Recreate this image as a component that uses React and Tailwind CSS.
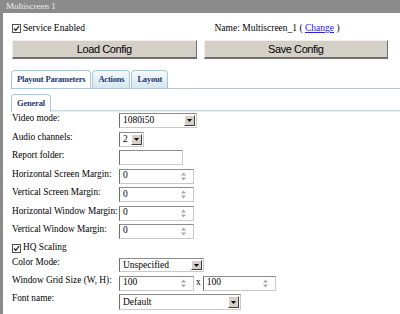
import React from "react";

function CheckBox() {
  return (
    <span className="inline-flex w-[9px] h-[9px] border border-[#505050] bg-white items-center justify-center">
      <svg width="7" height="7" viewBox="0 0 7 7">
        <path d="M1 3.5 L2.8 5.3 L6 1.2" stroke="#222" strokeWidth="1.3" fill="none" />
      </svg>
    </span>
  );
}

function Spin({ value, w = "w-[75px]" }) {
  return (
    <div className={`${w} h-[15px] flex items-center border border-[#c9c9c9] border-t-[#8c8c8c] border-l-[#6e6e6e] bg-white`}>
      <span className="flex-1 pl-[3px] text-[9.5px] leading-none text-black">{value}</span>
      <svg width="7" height="9" viewBox="0 0 7 9" className="mr-[6px]">
        <path d="M3.5 0.5 L6 3.5 L1 3.5 Z" fill="#a8a8a8" />
        <path d="M1 5.5 L6 5.5 L3.5 8.5 Z" fill="#a8a8a8" />
      </svg>
    </div>
  );
}

function Select({ value, w, h = "h-[15px]" }) {
  return (
    <div className={`${w} ${h} flex items-stretch border border-[#c9c9c9] border-t-[#8c8c8c] border-l-[#6e6e6e] bg-white`}>
      <span className="flex-1 pl-[3px] text-[9.5px] flex items-center text-black">{value}</span>
      <span className="w-[11px] m-[1px] flex items-center justify-center bg-[#d4d0c8] border border-white border-r-[#404040] border-b-[#404040]">
        <svg width="5" height="3" viewBox="0 0 5 3">
          <path d="M0 0 L5 0 L2.5 3 Z" fill="#000" />
        </svg>
      </span>
    </div>
  );
}

function Tab({ label, active }) {
  return (
    <div
      className={`h-[18px] px-[5px] mr-[1px] flex items-center rounded-t-[4px] border border-b-0 border-[#a9c9d6] text-[8.5px] tracking-[-0.2px] font-bold text-[#1d3b72] whitespace-nowrap ${
        active ? "bg-white" : "bg-linear-to-b from-[#f4f9fb] to-[#d6e7ee]"
      }`}
    >
      {label}
    </div>
  );
}

const rows = [
  ["Video mode:", <Select value="1080i50" w="w-[78px]" />, "h-[19px]"],
  ["Audio channels:", <Select value="2" w="w-[25px]" />, "h-[18px]"],
  ["Report folder:", <div className="w-[64px] h-[15px] border border-[#c9c9c9] border-t-[#8c8c8c] border-l-[#6e6e6e] bg-white" />, "h-[19px]"],
  ["Horizontal Screen Margin:", <Spin value="0" />, "h-[18px]"],
  ["Vertical Screen Margin:", <Spin value="0" />, "h-[19px]"],
  ["Horizontal Window Margin:", <Spin value="0" />, "h-[18px]"],
  ["Vertical Window Margin:", <Spin value="0" />, "h-[18px]"],
];

export default function App() {
  return (
    <div className="w-[400px] h-[314px] overflow-hidden flex flex-col bg-white font-['Liberation_Serif',serif] text-black">
      <div className="h-[13px] shrink-0 bg-[#8b8b8b] pl-[6px] text-[9px] leading-[13px] text-[#ececec]">
        Multiscreen 1
      </div>
      <div className="flex flex-1">
        <div className="w-[3px] bg-[#8b8b8b]" />
        <div className="flex-1 flex flex-col">
          <div className="grid grid-cols-2 gap-[7px] pl-[9px] pr-[12px] mt-[8px] h-[14px] items-center text-[9.5px] whitespace-nowrap">
            <div className="flex items-center gap-[2px]">
              <CheckBox />
              <span>Service Enabled</span>
            </div>
            <div className="pl-[11px]">
              Name: Multiscreen_1 ( <span className="text-[#2323d8] underline">Change</span> )
            </div>
          </div>
          <div className="grid grid-cols-2 gap-[7px] pl-[9px] pr-[12px] mt-[5px] font-['Liberation_Sans',sans-serif] text-[11px] tracking-[-0.4px]">
            <button className="h-[19px] bg-[#d4d0c8] border border-[#f0efec] border-r-[#6e6e6e] border-b-[#6e6e6e] border-b-2 text-black">
              Load Config
            </button>
            <button className="h-[19px] bg-[#d4d0c8] border border-[#f0efec] border-r-[#6e6e6e] border-b-[#6e6e6e] border-b-2 text-black">
              Save Config
            </button>
          </div>
          <div className="mt-[11px] ml-[8px] flex items-end border-b border-[#a9c9d6]">
            <Tab label="Playout Parameters" active />
            <Tab label="Actions" />
            <Tab label="Layout" />
          </div>
          <div className="mt-[5px] ml-[8px] flex items-end border-b border-[#c5dbe5] shadow-[0_1px_0_#e8f1f5]">
            <div className="h-[16px]">
              <Tab label="General" active />
            </div>
          </div>
          <div className="pl-[9px] flex flex-col text-[9.3px] whitespace-nowrap">
            {rows.map(([label, ctrl, h]) => (
              <div key={label} className={`${h} flex items-center`}>
                <div className="w-[107px] self-start leading-[13px] pt-[1px]">{label}</div>
                {ctrl}
              </div>
            ))}
            <div className="h-[16px] flex items-center gap-[2px]">
              <CheckBox />
              <span>HQ Scaling</span>
            </div>
            <div className="h-[18px] flex items-center">
              <div className="w-[107px] self-start leading-[13px]">Color Mode:</div>
              <Select value="Unspecified" w="w-[85px]" h="h-[14px]" />
            </div>
            <div className="h-[18px] flex items-center">
              <div className="w-[107px] self-start leading-[13px]">Window Grid Size (W, H):</div>
              <Spin value="100" />
              <span className="px-[2px]">x</span>
              <Spin value="100" w="w-[73px]" />
            </div>
            <div className="h-[20px] flex items-center">
              <div className="w-[107px] self-start leading-[13px]">Font name:</div>
              <Select value="Default" w="w-[122px]" h="h-[16px]" />
            </div>
          </div>
        </div>
      </div>
    </div>
  );
}
